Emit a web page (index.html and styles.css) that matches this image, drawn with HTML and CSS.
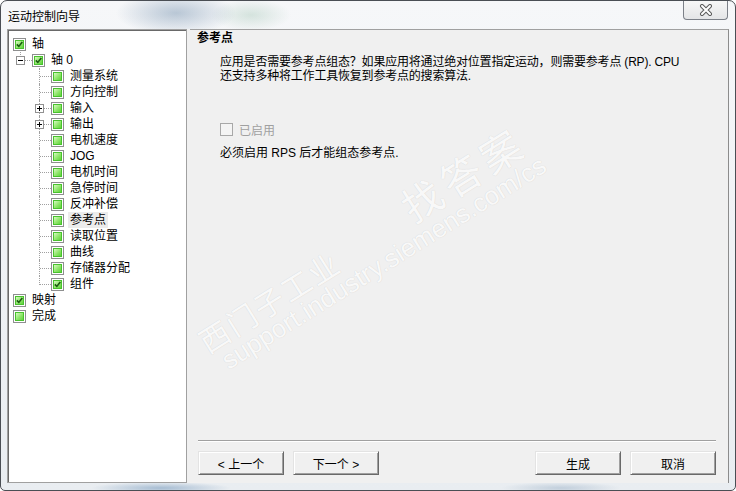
FILE: index.html
```html
<!DOCTYPE html>
<html lang="zh-CN">
<head>
    <meta charset="UTF-8">
    <title>运动控制向导</title>
    <link rel="stylesheet" href="styles.css">
</head>
<body>

    <div class="window">
        <div class="titlebar">
            <span class="title">运动控制向导</span>
            <button class="close-btn" title="关闭">
                <svg width="14" height="12" viewBox="0 0 14 12">
                    <path d="M3 2 L11 10 M11 2 L3 10" stroke="#5b5b5b" stroke-width="4" stroke-linecap="round"/>
                    <path d="M3 2 L11 10 M11 2 L3 10" stroke="#ffffff" stroke-width="2" stroke-linecap="round"/>
                </svg>
            </button>
        </div>

        <div class="client">
            <div class="tree">
                <div class="node lv0"><span class="check"><i><svg width="7" height="7" viewBox="0 0 7 7"><path d="M0.8 3.4 L2.8 5.4 L6.3 0.9" fill="none" stroke="#1d5a12" stroke-width="1.6"/></svg></i></span><span class="label">轴</span></div>
                <div class="node lv1"><span class="twig last"><span class="elbow"></span><span class="expander minus"></span></span><span class="check"><i><svg width="7" height="7" viewBox="0 0 7 7"><path d="M0.8 3.4 L2.8 5.4 L6.3 0.9" fill="none" stroke="#1d5a12" stroke-width="1.6"/></svg></i></span><span class="label">轴 0</span></div>
                <div class="node lv2"><span class="twig"><span class="elbow"></span></span><span class="check"><i></i></span><span class="label">测量系统</span></div>
                <div class="node lv2"><span class="twig"><span class="elbow"></span></span><span class="check"><i></i></span><span class="label">方向控制</span></div>
                <div class="node lv2"><span class="twig"><span class="elbow"></span><span class="expander plus"></span></span><span class="check"><i></i></span><span class="label">输入</span></div>
                <div class="node lv2"><span class="twig"><span class="elbow"></span><span class="expander plus"></span></span><span class="check"><i></i></span><span class="label">输出</span></div>
                <div class="node lv2"><span class="twig"><span class="elbow"></span></span><span class="check"><i></i></span><span class="label">电机速度</span></div>
                <div class="node lv2"><span class="twig"><span class="elbow"></span></span><span class="check"><i></i></span><span class="label">JOG</span></div>
                <div class="node lv2"><span class="twig"><span class="elbow"></span></span><span class="check"><i></i></span><span class="label">电机时间</span></div>
                <div class="node lv2"><span class="twig"><span class="elbow"></span></span><span class="check"><i></i></span><span class="label">急停时间</span></div>
                <div class="node lv2"><span class="twig"><span class="elbow"></span></span><span class="check"><i></i></span><span class="label">反冲补偿</span></div>
                <div class="node lv2"><span class="twig"><span class="elbow"></span></span><span class="check"><i></i></span><span class="label selected">参考点</span></div>
                <div class="node lv2"><span class="twig"><span class="elbow"></span></span><span class="check"><i></i></span><span class="label">读取位置</span></div>
                <div class="node lv2"><span class="twig"><span class="elbow"></span></span><span class="check"><i></i></span><span class="label">曲线</span></div>
                <div class="node lv2"><span class="twig"><span class="elbow"></span></span><span class="check"><i></i></span><span class="label">存储器分配</span></div>
                <div class="node lv2"><span class="twig last"><span class="elbow"></span></span><span class="check"><i><svg width="7" height="7" viewBox="0 0 7 7"><path d="M0.8 3.4 L2.8 5.4 L6.3 0.9" fill="none" stroke="#1d5a12" stroke-width="1.6"/></svg></i></span><span class="label">组件</span></div>
                <div class="node lv0"><span class="check"><i><svg width="7" height="7" viewBox="0 0 7 7"><path d="M0.8 3.4 L2.8 5.4 L6.3 0.9" fill="none" stroke="#1d5a12" stroke-width="1.6"/></svg></i></span><span class="label">映射</span></div>
                <div class="node lv0"><span class="check"><i></i></span><span class="label">完成</span></div>
            </div>

            <div class="pane">
                <div class="pane-title">参考点</div>
                <p class="desc">应用是否需要参考点组态？如果应用将通过绝对位置指定运动，则需要参考点 (RP). CPU<br>还支持多种将工作工具恢复到参考点的搜索算法.</p>
                <label class="enable"><span class="box"></span>已启用</label>
                <p class="note">必须启用 RPS 后才能组态参考点.</p>
                <div class="spacer"></div>
                <div class="separator"></div>
                <div class="buttons">
                    <button class="btn">&lt; 上一个</button>
                    <button class="btn">下一个 &gt;</button>
                    <span class="grow"></span>
                    <button class="btn">生成</button>
                    <button class="btn">取消</button>
                </div>
            </div>
        </div>

        <div class="watermark">
            <span class="wm wm-cn">西门子工业</span>
            <span class="wm wm-url">support.industry.siemens.com/cs</span>
            <span class="wm wm-find">找答案</span>
        </div>
    </div>

</body>
</html>
```

FILE: styles.css
```css
body {
    margin: 0;
    padding: 0;
    font-family: "Liberation Sans", "Noto Sans CJK SC", sans-serif;
    font-size: 12px;
    color: #000;
    background: #fff;
}
.window {
    position: relative;
    width: 736px;
    height: 491px;
    box-sizing: border-box;
    border: 1px solid #4a4e54;
    border-radius: 7px 7px 5px 5px;
    padding: 0 6px 7px 6px;
    display: flex;
    flex-direction: column;
    overflow: hidden;
    background:
        radial-gradient(ellipse 60px 22px at 175px 12px, rgba(110, 140, 170, 0.45), transparent),
        radial-gradient(ellipse 40px 16px at 250px 14px, rgba(150, 190, 170, 0.35), transparent),
        radial-gradient(ellipse 70px 6px at 160px 487px, rgba(100, 140, 180, 0.5), transparent),
        radial-gradient(ellipse 60px 6px at 560px 487px, rgba(120, 150, 180, 0.35), transparent),
        linear-gradient(to bottom, #f6f7f9, #e9edf1);
}
.titlebar {
    height: 28px;
    display: flex;
    align-items: center;
    justify-content: space-between;
    padding-left: 1px;
}
.title {
    font-size: 12px;
    padding-top: 1px;
}
.close-btn {
    align-self: flex-start;
    width: 45px;
    height: 19px;
    margin-right: 1px;
    padding: 0;
    border: 1px solid #7c8088;
    border-top: none;
    border-radius: 0 0 4px 4px;
    background: linear-gradient(to bottom, #f7f7f7, #e4e5e7);
    display: flex;
    align-items: center;
    justify-content: center;
}
.client {
    flex: 1;
    display: flex;
    gap: 3px;
    background-color: #f0f0f0;
    min-height: 0;
}

/* tree view */
.tree {
    width: 180px;
    box-sizing: border-box;
    border: 1px solid #a0a0a0;
    box-shadow: inset 1px 1px 0 #696969;
    background: #fff;
    padding: 6px 0 0 1px;
}
.node {
    display: flex;
    align-items: center;
    height: 16px;
}
.lv0 { padding-left: 4px; }
.lv1 { padding-left: 11px; }
.lv2 { padding-left: 30px; }
.twig {
    position: relative;
    align-self: stretch;
    width: 12px;
    flex: none;
    box-sizing: border-box;
    border-left: 1px dotted #a0a0a0;
}
.twig .elbow {
    display: block;
    height: 9px;
    box-sizing: border-box;
    border-bottom: 1px dotted #a0a0a0;
}
.twig.last {
    border-left: none;
}
.twig.last .elbow {
    border-left: 1px dotted #a0a0a0;
}
.expander {
    position: absolute;
    left: -5px;
    top: 4px;
    width: 9px;
    height: 9px;
    box-sizing: border-box;
    border: 1px solid #919191;
    background-color: #fff;
}
.twig.last .expander {
    left: -4px;
}
.expander.minus {
    background: #fff linear-gradient(#000, #000) center / 5px 1px no-repeat;
}
.expander.plus {
    background:
        linear-gradient(#000, #000) center / 5px 1px no-repeat,
        linear-gradient(#000, #000) center / 1px 5px no-repeat,
        #fff;
}
.check {
    flex: none;
    width: 13px;
    height: 13px;
    box-sizing: border-box;
    border: 1px solid #8e8f8f;
    padding: 1px;
    background: #fff;
    margin-right: 6px;
}
.check i {
    display: flex;
    align-items: center;
    justify-content: center;
    width: 100%;
    height: 100%;
    box-sizing: border-box;
    border: 1px solid #49c22e;
    background: linear-gradient(135deg, #d8f9c2, #8ee66a 55%, #5fd23c);
}
.label {
    white-space: nowrap;
    line-height: 16px;
}
.label.selected {
    background-color: #ececec;
    padding: 0 2px;
    margin-left: -2px;
}

/* right pane */
.pane {
    flex: 1;
    display: flex;
    flex-direction: column;
    border-top: 1px solid #a0a0a0;
    border-right: 1px solid #8c8c8c;
    padding: 0 12px 8px 8px;
}
.pane-title {
    font-weight: bold;
    line-height: 16px;
    margin-left: -1px;
}
.desc {
    margin: 9px 0 0 22px;
    line-height: 14px;
    white-space: nowrap;
    letter-spacing: -0.2px;
}
.enable {
    display: flex;
    align-items: center;
    height: 16px;
    margin: 38px 0 0 22px;
    color: #a0a0a0;
}
.enable .box {
    width: 13px;
    height: 13px;
    box-sizing: border-box;
    border: 1px solid #a8a8a8;
    background: #f4f4f4;
    margin-right: 6px;
}
.note {
    margin: 9px 0 0 22px;
    line-height: 14px;
}
.spacer {
    flex: 1;
}
.separator {
    border-top: 1px solid #a0a0a0;
    border-bottom: 1px solid #fff;
}
.buttons {
    display: flex;
    gap: 9px;
    margin-top: 9px;
}
.grow {
    flex: 1;
}
.btn {
    width: 86px;
    height: 24px;
    font-family: inherit;
    font-size: 12px;
    color: #000;
    background-color: #f0f0f0;
    border: 1px solid;
    border-color: #e3e3e3 #696969 #696969 #e3e3e3;
    box-shadow: inset 1px 1px 0 #fff, inset -1px -1px 0 #a0a0a0;
    padding: 0;
}

/* watermark over the picture */
.watermark {
    position: absolute;
    inset: 0;
    pointer-events: none;
}
.wm {
    position: absolute;
    width: max-content;
    transform: translate(-50%, -50%) rotate(-32deg);
    color: rgba(255, 255, 255, 0.9);
    text-shadow: 0 0 1px rgba(0, 0, 0, 0.16);
    white-space: nowrap;
}
.wm-cn {
    left: 268px;
    top: 300px;
    font-size: 30px;
    letter-spacing: 2px;
}
.wm-url {
    left: 383px;
    top: 262px;
    font-family: "Liberation Sans", sans-serif;
    font-size: 26px;
}
.wm-find {
    left: 462px;
    top: 172px;
    font-size: 40px;
    letter-spacing: 6px;
}
```
